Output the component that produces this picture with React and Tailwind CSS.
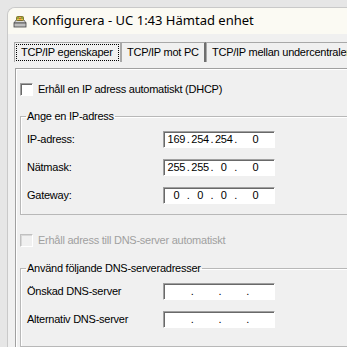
function TitleIcon() {
  return (
    <svg width="14" height="13" viewBox="0 0 14 13" className="shrink-0">
      <path d="M1 8 L3 5 L11 5 L13 8 Z" fill="#d8d8d8" stroke="#555" strokeWidth="0.8" />
      <rect x="1" y="8" width="12" height="4" fill="#bdbdbd" stroke="#444" strokeWidth="0.8" />
      <rect x="3.5" y="1.5" width="7" height="4" rx="1" fill="#e8c84a" stroke="#6b5a10" strokeWidth="0.8" />
      <circle cx="5" cy="3" r="0.8" fill="#2c7a2c" />
      <circle cx="7" cy="3.5" r="0.8" fill="#c23030" />
      <circle cx="9" cy="3" r="0.8" fill="#2c7a2c" />
    </svg>
  );
}

function Checkbox({ disabled }) {
  return (
    <div
      className={
        disabled
          ? "w-[13px] h-[13px] shrink-0 border border-[#c0c0c0] border-b-[#fff] border-r-[#fff] bg-[#f0f0f0] shadow-[inset_1px_1px_0_#d8d8d8]"
          : "w-[13px] h-[13px] shrink-0 border border-[#a0a0a0] border-b-[#fff] border-r-[#fff] bg-white shadow-[inset_1px_1px_0_#696969]"
      }
    />
  );
}

function IpField({ parts, wide }) {
  const seg = wide ? "w-[25px] text-center" : "w-[22px] text-center";
  const last = wide ? "w-[25px] text-center" : "w-[39px] text-center";
  return (
    <div className="w-[112px] h-[17px] shrink-0 border border-[#a0a0a0] border-b-[#fff] border-r-[#fff] bg-white shadow-[inset_1px_1px_0_#696969] flex items-center pl-[2px] leading-none">
      <span className={seg}>{parts[0]}</span>
      <span className="w-[3px] text-center">.</span>
      <span className={seg}>{parts[1]}</span>
      <span className="w-[3px] text-center">.</span>
      <span className={seg}>{parts[2]}</span>
      <span className="w-[3px] text-center">.</span>
      <span className={last}>{parts[3]}</span>
    </div>
  );
}

function Row({ label, children }) {
  return (
    <div className="flex items-center h-[17px]">
      <span className="w-[142px] shrink-0 pl-[6px]">{label}</span>
      {children}
    </div>
  );
}

export default function App() {
  return (
    <div className="w-[347px] h-[347px] overflow-hidden bg-[#e6e6e6] pl-[7px] pt-[7px] font-['Liberation_Sans',Arial,sans-serif] text-[11px] tracking-[-0.25px] text-black">
      <div className="w-[360px] h-[360px] rounded-tl-[8px] border-l border-t border-[#c9c9c9] bg-[#f0f0f0] overflow-hidden">
        <div className="h-[26px] bg-[#fbfaf3] flex items-center pl-[5px] font-['Noto_Sans',sans-serif] text-[13px] tracking-normal">
          <TitleIcon />
          <span className="ml-[5px]">Konfigurera - UC 1:43 Hämtad enhet</span>
        </div>

        <div className="pl-[6px] pt-[8px]">
          <div className="flex h-[20px]">
            <div className="w-[107px] shrink-0 h-full border border-b-0 border-[#a8a8a8] p-[1px]">
              <div className="h-full border border-dotted border-black flex items-center pl-[4px] whitespace-nowrap">
                TCP/IP egenskaper
              </div>
            </div>
            <div className="w-[85px] shrink-0 h-full border-l border-t border-r-2 border-[#a8a8a8] border-r-[#6e6e6e] flex items-center pl-[5px] whitespace-nowrap">
              TCP/IP mot PC
            </div>
            <div className="w-[200px] shrink-0 h-full border-l border-t border-[#a8a8a8] flex items-center pl-[5px] whitespace-nowrap">
              TCP/IP mellan undercentraler
            </div>
          </div>

          <div className="mt-[6px] ml-[1px] w-[360px] h-[300px] border-l border-t border-[#a0a0a0] shadow-[inset_1px_1px_0_#fff] pl-[4px] pt-[14px]">
            <div className="flex items-center gap-[5px] h-[13px]">
              <Checkbox />
              <span>Erhåll en IP adress automatiskt (DHCP)</span>
            </div>

            <fieldset className="mt-[14px] w-[340px] border border-[#b8b8b8] shadow-[inset_1px_1px_0_#fff] px-0 pt-[8px] pb-[10px]">
              <legend className="ml-[5px] px-[1px] leading-[13px]">Ange en IP-adress</legend>
              <div className="flex flex-col gap-[11px]">
                <Row label="IP-adress:">
                  <IpField parts={["169", "254", "254", "0"]} />
                </Row>
                <Row label="Nätmask:">
                  <IpField parts={["255", "255", "0", "0"]} />
                </Row>
                <Row label="Gateway:">
                  <IpField parts={["0", "0", "0", "0"]} />
                </Row>
              </div>
            </fieldset>

            <div className="mt-[19px] flex items-center gap-[5px] h-[13px] text-[#a0a0a0]">
              <Checkbox disabled />
              <span>Erhåll adress till DNS-server automatiskt</span>
            </div>

            <fieldset className="mt-[15px] w-[340px] border border-[#b8b8b8] shadow-[inset_1px_1px_0_#fff] px-0 pt-[8px] pb-[18px]">
              <legend className="ml-[5px] px-[1px] leading-[13px]">Använd följande DNS-serveradresser</legend>
              <div className="flex flex-col gap-[11px]">
                <Row label="Önskad DNS-server">
                  <IpField parts={["", "", "", ""]} wide />
                </Row>
                <Row label="Alternativ DNS-server">
                  <IpField parts={["", "", "", ""]} wide />
                </Row>
              </div>
            </fieldset>
          </div>
        </div>
      </div>
    </div>
  );
}
